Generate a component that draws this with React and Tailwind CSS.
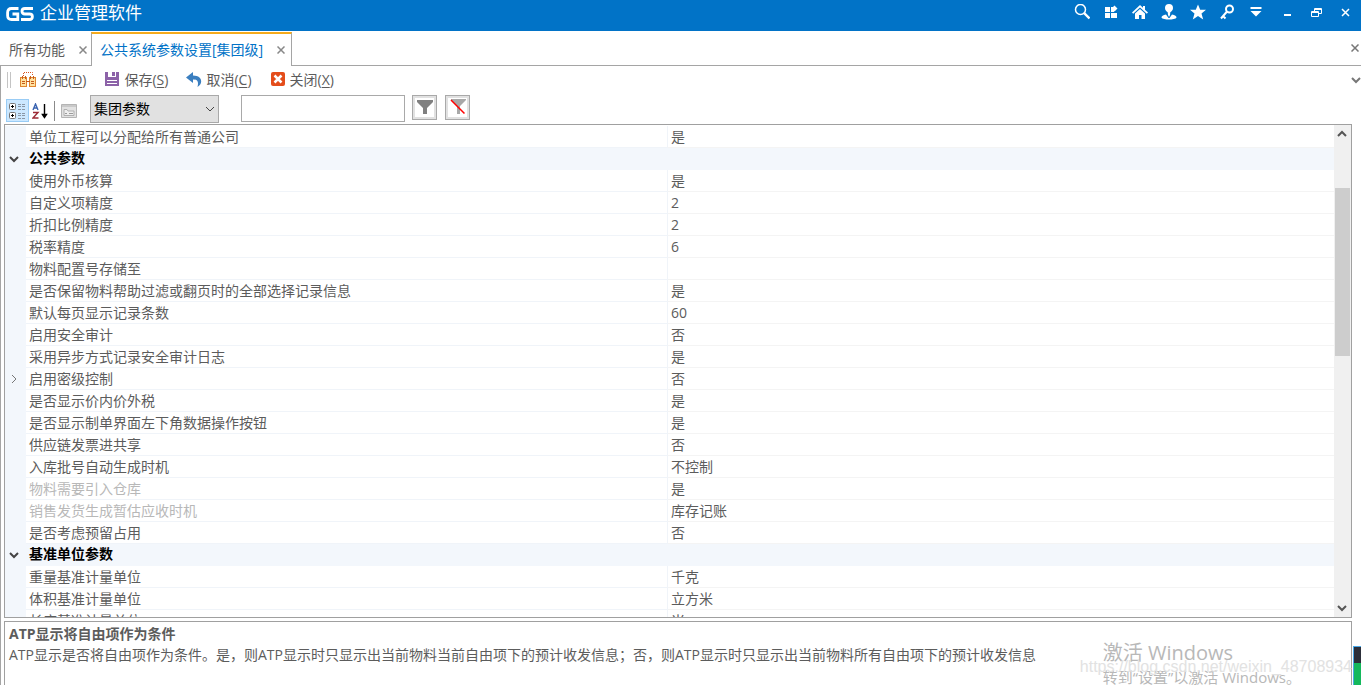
import { useState } from 'react';

const rows = [
  { label: '单位工程可以分配给所有普通公司', value: '是' },
  { label: '公共参数', group: true },
  { label: '使用外币核算', value: '是' },
  { label: '自定义项精度', value: '2' },
  { label: '折扣比例精度', value: '2' },
  { label: '税率精度', value: '6' },
  { label: '物料配置号存储至', value: '' },
  { label: '是否保留物料帮助过滤或翻页时的全部选择记录信息', value: '是' },
  { label: '默认每页显示记录条数', value: '60' },
  { label: '启用安全审计', value: '否' },
  { label: '采用异步方式记录安全审计日志', value: '是' },
  { label: '启用密级控制', value: '否', expandable: true },
  { label: '是否显示价内价外税', value: '是' },
  { label: '是否显示制单界面左下角数据操作按钮', value: '是' },
  { label: '供应链发票进共享', value: '否' },
  { label: '入库批号自动生成时机', value: '不控制' },
  { label: '物料需要引入仓库', value: '是', disabled: true },
  { label: '销售发货生成暂估应收时机', value: '库存记账', disabled: true },
  { label: '是否考虑预留占用', value: '否' },
  { label: '基准单位参数', group: true },
  { label: '重量基准计量单位', value: '千克' },
  { label: '体积基准计量单位', value: '立方米' },
  { label: '长度基准计量单位', value: '米' },
];

const Chevron = ({ dir = 'down', className = '' }) => {
  const paths = { down: 'M1 3l4 4 4-4', up: 'M1 7l4-4 4 4', right: 'M3 1l4 4-4 4' };
  return (
    <svg viewBox="0 0 10 10" className={`size-[10px] ${className}`} fill="none" stroke="currentColor">
      <path d={paths[dir]} />
    </svg>
  );
};

const Cross = ({ className = '' }) => (
  <svg viewBox="0 0 8 8" className={`size-2 ${className}`} fill="none" stroke="currentColor" strokeWidth="1.5">
    <path d="M0.5 0.5l7 7M7.5 0.5l-7 7" />
  </svg>
);

/* Title bar icons, all on a 16px box */
const headerIcons = [
  {
    name: '搜索',
    art: (
      <g fill="none" stroke="currentColor">
        <circle cx="6.5" cy="5.5" r="5" strokeWidth="1.5" />
        <path d="M10.2 9.2L15.5 14.5" strokeWidth="2.4" />
      </g>
    ),
  },
  {
    name: '应用',
    art: <path d="M2 3h5v5H2zM2 9h5v5H2zM8 9h6v5H8zM8 3h3v5H8zM11.500 1.500l3 3-3 3-3-3z" />,
  },
  {
    name: '主页',
    art: <path d="M8 1L0 8.5l1.2 1.2L8 3.6l6.800 6.100L16 8.500l-3-2.800V2h-2v1.800zM8 5L3 9.500V15h4v-4h2.500v4H13V9.500z" />,
  },
  {
    name: '用户',
    art: <path d="M8 0a4 4 0 0 0-4 4c0 2 1.300 3.500 2.700 4.300L7 11l1 2 1-2 .3-2.700C10.700 7.500 12 6 12 4a4 4 0 0 0-4-4zM5 10.500c-3 .5-4.500 1.500-4.500 3C1 15 5 15.500 8 15.500s7-.5 7.500-2c0-1.500-1.500-2.500-4.500-3L8.500 14h-1z" />,
  },
  {
    name: '收藏',
    art: <path d="M8 0.500l2.200 5.200H16l-4.500 3.700 1.700 6.100L8 12 2.800 15.500l1.700-6.100L0 5.700h5.800z" />,
  },
  {
    name: '密码',
    art: (
      <g fill="none" stroke="currentColor">
        <circle cx="10.5" cy="5" r="3.500" strokeWidth="2" />
        <path d="M8 7.500L2 14.500M3.500 11.500l3 3" strokeWidth="2" />
      </g>
    ),
  },
  {
    name: '更多',
    art: <path d="M2.500 3h11v2h-11zM2.500 7h11L8 12.500z" />,
  },
];

const TitleBar = () => (
  <header className="flex h-[31px] shrink-0 items-start bg-[#0173c7] text-white">
    <svg viewBox="0 0 28 16" className="mt-[6px] ml-[6px] h-4 w-7" fill="none" stroke="#fff" strokeWidth="2.8" aria-label="GS">
      <path d="M12.500 2.500H5.500Q1.600 2.500 1.600 6.500v3q0 4 4 4h6.200V8H6.500" />
      <path d="M27 2.500h-8q-3 0-3 2.700T19 8h4.500q2.900 0 2.900 2.700t-2.900 2.800H15" />
    </svg>
    <h1 className="ml-[6px] text-[17px] leading-[26px]">企业管理软件</h1>
    <div className="ml-auto flex gap-[13px] pt-1 pr-[18px]">
      {headerIcons.map((icon) => (
        <button key={icon.name} type="button" aria-label={icon.name} className="size-4">
          <svg viewBox="0 0 16 16" className="size-4" fill="currentColor">
            {icon.art}
          </svg>
        </button>
      ))}
    </div>
    <div className="flex gap-[18px] pt-2 pr-[10px]">
      <button type="button" aria-label="最小化" className="size-[11px]">
        <svg viewBox="0 0 11 11" className="size-[11px]">
          <path d="M2 6h7v2H2z" fill="#fff" />
        </svg>
      </button>
      <button type="button" aria-label="还原" className="size-[11px]">
        <svg viewBox="0 0 11 11" className="size-[11px]" fill="none" stroke="#fff">
          <path d="M3.500 3V0.500h7v5H8M3.500 1.500h7M0.500 3.500h7v5h-7zM0.500 4.500h7" />
        </svg>
      </button>
      <button type="button" aria-label="退出" className="size-[11px]">
        <svg viewBox="0 0 11 11" className="size-[11px]" fill="none" stroke="#fff" strokeWidth="1.500">
          <path d="M2 1l7 7M9 1L2 8" />
        </svg>
      </button>
    </div>
  </header>
);

const TabBar = () => (
  <nav className="flex h-[35px] shrink-0 items-stretch border-b border-[#a5a5a5]">
    <div className="flex w-[91px] items-center justify-between pt-1 pr-1 pl-[9px]">
      <button type="button">所有功能</button>
      <button type="button" aria-label="关闭所有功能">
        <Cross className="text-[#888]" />
      </button>
    </div>
    <div className="mt-px -mb-px flex w-[201px] items-center justify-between border-x border-t-2 border-x-[#a5a5a5] border-t-[#f5ab1c] bg-white pr-[6px] pl-2 text-[#0173c7]">
      <button type="button">公共系统参数设置[集团级]</button>
      <button type="button" aria-label="关闭页签">
        <Cross className="text-[#888]" />
      </button>
    </div>
    <button type="button" aria-label="关闭" className="ml-auto pr-[2px]">
      <Cross className="text-[#777]" />
    </button>
  </nav>
);

const commands = [
  {
    label: '分配',
    hotkey: 'D',
    icon: (
      <svg viewBox="0 0 16 16" className="size-4">
        <path d="M3.500 4V0.500h9V4" fill="none" stroke="#d9531e" strokeDasharray="1 1" />
        <path d="M0 5h7v10H0zM9 5h7v10H9z" fill="#e0852f" />
        <path d="M1 6h5v8H1zM10 6h5v8h-5z" fill="#ffe2a0" />
        <path d="M2 4h1v3H2zM5 4h1v3H5zM10 4h1v3h-1zM13 4h1v3h-1z" fill="#c65a1a" />
        <path d="M2 9.500h3M2 11.500h3M11 9.500h3M11 11.500h3M6 9.500h4" stroke="#c65a1a" />
      </svg>
    ),
  },
  {
    label: '保存',
    hotkey: 'S',
    icon: (
      <svg viewBox="0 0 16 16" className="size-4">
        <path d="M1 0h14v14H1z" fill="#8c62a8" />
        <path d="M4 0h8v5H4zM3 8h10v1H3zM3 11h10v1H3z" fill="#fff" />
        <path d="M8 0h3v4H8z" fill="#8c62a8" />
      </svg>
    ),
  },
  {
    label: '取消',
    hotkey: 'C',
    icon: (
      <svg viewBox="0 0 16 16" className="size-4">
        <path d="M7 0L0 5.500 7 11V7.500c4 0 6 1 4.500 7.500C17 12 17 3.500 7 3.500z" fill="#3b7fc0" />
      </svg>
    ),
  },
  {
    label: '关闭',
    hotkey: 'X',
    icon: (
      <svg viewBox="0 0 16 16" className="size-4">
        <rect x="1" y="0" width="14" height="14" rx="2" fill="#e44d1b" />
        <path d="M4.500 3.500l7 7M11.500 3.500l-7 7" stroke="#fff" strokeWidth="2.500" />
      </svg>
    ),
  },
];

const CommandBar = () => (
  <div className="flex h-[27px] shrink-0 items-center pl-[6px]">
    <span className="mr-[9px] h-4 w-1 border-x border-[#c4c4c4]" />
    <div className="flex flex-1 gap-[18px]">
      {commands.map((c) => (
        <button key={c.hotkey} type="button" className="flex items-center gap-1">
          {c.icon}
          <span>
            {c.label}(<u className="underline-offset-2">{c.hotkey}</u>)
          </span>
        </button>
      ))}
    </div>
    <button type="button" aria-label="更多命令">
      <Chevron className="stroke-2 text-[#777]" />
    </button>
  </div>
);

const FilterBar = ({ scope, setScope }) => (
  <div className="flex h-[31px] shrink-0 items-center pl-[5px]">
    <button type="button" aria-label="按分类排序" className="mt-1 flex size-[23px] items-center justify-center border border-[#99ccf5] bg-[#cce8ff]">
      <svg viewBox="0 0 17 17" className="size-[17px]" fill="none" stroke="#777">
        <rect x="0.500" y="1.500" width="6" height="6" rx="1" fill="#fff" />
        <rect x="0.500" y="10.500" width="6" height="6" rx="1" fill="#fff" />
        <path d="M2 4.500h3M3.500 3v3M2 13.500h3M3.500 12v3" stroke="#000" />
        <path d="M9 2.500h3M13 2.500h3M9 4.500h3M13 4.500h3M9 7.500h3M13 7.500h3M9 11.500h3M13 11.500h3M9 13.500h3M13 13.500h3M9 16.500h3M13 16.500h3" stroke="#8a97a5" />
      </svg>
    </button>
    <button type="button" aria-label="按字母排序" className="mt-1 ml-[3px] size-4">
      <svg viewBox="0 0 16 16" className="size-4" fill="none">
        <path d="M1 7l2.500-6L6 7M2 5h3" stroke="#3a63b0" strokeWidth="1.400" />
        <path d="M1 9.500h5L1 15h5.500" stroke="#9c2a35" strokeWidth="1.400" />
        <path d="M12.500 1v12M10.500 11.500l2 3 2-3z" stroke="#000" strokeWidth="1.400" fill="#000" />
      </svg>
    </button>
    <span className="mt-1 ml-[6px] h-5 w-px bg-[#8a8a8a]" />
    <button type="button" aria-label="属性页" disabled className="mt-1 ml-[6px] size-4">
      <svg viewBox="0 0 16 16" className="size-4">
        <path d="M0.500 1.500h15v13H0.500z" fill="#e2e2e2" stroke="#b5b5b5" />
        <path d="M0.500 3h15M3 6.500h3l1 1.500h6v4.500H3z" fill="#efefef" stroke="#b0b0b0" />
        <path d="M4 10.500h2M8 10.500h4" stroke="#9a9a9a" />
      </svg>
    </button>
    <div className="relative ml-[13px]">
      <select
        aria-label="参数范围"
        value={scope}
        onChange={(e) => setScope(e.target.value)}
        className="h-7 w-[129px] appearance-none border border-[#a9a9a9] bg-[#e1e1e1] pl-[3px] text-black"
      >
        <option>集团参数</option>
        <option>公司参数</option>
      </select>
      <Chevron className="pointer-events-none absolute top-[9px] right-1 text-[#444]" />
    </div>
    <input type="text" aria-label="查找参数" className="ml-[22px] h-[27px] w-[164px] border border-[#a9a9a9] bg-white px-1 outline-none" />
    <button type="button" aria-label="过滤" className="mr-2 mb-[3px] ml-[7px] flex size-[25px] items-center justify-center border border-[#a9a9a9] bg-white ring-2 ring-[#e1e1e1] ring-inset">
      <svg viewBox="0 0 16 16" className="size-4">
        <path d="M0 1h16v2l-6 6v6H6V9L0 3z" fill="#808080" />
      </svg>
    </button>
    <button type="button" aria-label="清除过滤" className="mb-[3px] flex size-[25px] items-center justify-center border border-[#a9a9a9] bg-white ring-2 ring-[#e1e1e1] ring-inset">
      <svg viewBox="0 0 16 16" className="size-4">
        <path d="M1 0h15v1l-6 6v8H7V7L1 1z" fill="#a8a8a8" />
        <path d="M1 1l13.500 13.500" stroke="#f00" strokeWidth="1.500" />
      </svg>
    </button>
  </div>
);

const ParamRow = ({ row }) => {
  if (row.group) {
    return (
      <tr className="h-[22px] bg-[#f3f7fc] text-black">
        <td className="p-0">
          <Chevron className="ml-1 stroke-2 text-[#444]" />
        </td>
        <th colSpan={2} scope="colgroup" className="p-0 pl-[3px] text-left align-top leading-5 font-bold">
          {row.label}
        </th>
      </tr>
    );
  }
  return (
    <tr className={row.disabled ? 'h-[22px] text-[#b8b8b8]' : 'h-[22px]'}>
      <td className="bg-[#f3f7fc] p-0">
        {row.expandable && <Chevron dir="right" className="ml-1 text-[#777]" />}
      </td>
      <th scope="row" className="border-r border-b border-[#f0f4f9] p-0 pl-[3px] text-left leading-[21px] font-normal">
        {row.label}
      </th>
      <td className="border-b border-[#f4f4f4] p-0 pt-px pl-[3px] leading-5 text-[#5c5c5c]">{row.value}</td>
    </tr>
  );
};

const ParamGrid = () => (
  <div className="mr-[9px] ml-[3px] flex min-h-0 flex-1 overflow-hidden border border-[#a0a0a0]">
    <div className="min-w-0 flex-1 overflow-hidden pt-px">
      <table className="w-full table-fixed border-separate border-spacing-0">
        <colgroup>
          <col className="w-[21px]" />
          <col className="w-[48.3%]" />
          <col />
        </colgroup>
        <tbody>
          {rows.map((row) => (
            <ParamRow key={row.label} row={row} />
          ))}
        </tbody>
      </table>
    </div>
    <div className="flex w-[17px] shrink-0 flex-col items-center bg-[#f0f0f0] py-1">
      <Chevron dir="up" className="mr-[2px] stroke-2 text-[#555]" />
      <div className="mt-[49px] mr-px h-[168px] w-[15px] bg-[#cdcdcd]" />
      <Chevron className="mt-auto mr-[2px] stroke-2 text-[#555]" />
    </div>
  </div>
);

const HelpPanel = () => (
  <section className="mt-[3px] mr-[9px] ml-[3px] h-16 shrink-0 border border-b-0 border-[#a0a0a0] pt-px pl-1">
    <h2 className="leading-[21px] font-bold">ATP显示将自由项作为条件</h2>
    <p className="leading-[21px] whitespace-nowrap">
      ATP显示是否将自由项作为条件。是，则ATP显示时只显示出当前物料当前自由项下的预计收发信息；否，则ATP显示时只显示出当前物料所有自由项下的预计收发信息
    </p>
  </section>
);

export default function App() {
  const [scope, setScope] = useState('集团参数');

  return (
    <div className="relative flex h-screen flex-col overflow-hidden bg-white font-['Open_Sans','Noto_Sans_CJK_SC',sans-serif] text-[14px] leading-5 text-[#5c5c5c]">
      <TitleBar />
      <TabBar />
      <main className="flex min-h-0 flex-1 flex-col border-l border-[#a5a5a5]">
        <CommandBar />
        <FilterBar scope={scope} setScope={setScope} />
        <ParamGrid />
        <HelpPanel />
      </main>

      {/* Overlays above the desktop */}
      <div className="pointer-events-none absolute right-[60px] bottom-[-3px] text-[#b8b8b8]">
        <p className="text-[20px] leading-[26px]">激活 Windows</p>
        <p className="text-[15px] leading-[22px]">转到“设置”以激活 Windows。</p>
      </div>
      <p className="pointer-events-none absolute right-[9px] bottom-2 font-['Liberation_Sans',sans-serif] text-[16px] text-[#e2e2e2]">
        https://blog.csdn.net/weixin_48708934
      </p>
      <div className="absolute right-0 bottom-0 flex h-[39px] w-[8px] flex-col border-t border-l border-[#4aa8e8] bg-[#14b85c]">
        <span className="h-4 bg-[#2c2f3a]" />
      </div>
    </div>
  );
}
